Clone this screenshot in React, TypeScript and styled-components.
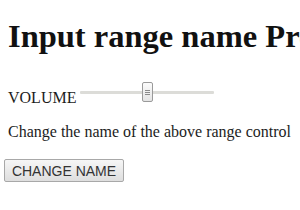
import React, { useState } from 'react';
import styled, { createGlobalStyle } from 'styled-components';

const GlobalStyle = createGlobalStyle`
    html, body {
        margin: 0;
        background: #ffffff;
        overflow: hidden;
    }
    body {
        padding: 8px;
        font-family: "Liberation Serif", "Times New Roman", serif;
        color: #1c1c1c;
        white-space: nowrap;
    }
`

const Title = styled.h1`
    font-size: 32.5px;
    font-weight: bold;
    margin: 10px 0 0 0;
    line-height: 37px;
    color: #111;
`

const VolumeRow = styled.div`
    display: flex;
    align-items: flex-start;
    margin-top: 27px;
    height: 24px;
    font-size: 16px;
`

const Label = styled.span`
    align-self: flex-end;
    line-height: 16px;
`

const Range = styled.input`
    -webkit-appearance: none;
    appearance: none;
    width: 134px;
    height: 20px;
    margin: 0 0 0 4px;
    background: transparent;

    &::-webkit-slider-runnable-track {
        height: 3px;
        background: #dcdcd8;
        border-radius: 1px;
    }

    &::-webkit-slider-thumb {
        -webkit-appearance: none;
        width: 11px;
        height: 20px;
        margin-top: -9px;
        border: 1px solid #9a9a9a;
        border-radius: 2px;
        background:
            linear-gradient(#8a8a8a, #8a8a8a) center 7px / 5px 1px no-repeat,
            linear-gradient(#8a8a8a, #8a8a8a) center 9px / 5px 1px no-repeat,
            linear-gradient(#8a8a8a, #8a8a8a) center 11px / 5px 1px no-repeat,
            linear-gradient(#fbfbfb, #e4e4e4);
        box-sizing: border-box;
    }
`

const Note = styled.p`
    font-size: 16px;
    margin: 16px 0 0 0;
    line-height: 20px;
`

const Button = styled.button`
    display: block;
    margin: 17px 0 0 -4px;
    width: 120px;
    height: 23px;
    padding: 0;
    font-family: "Liberation Sans", Arial, sans-serif;
    font-size: 14px;
    color: #333;
    border: 1px solid #a8a8a8;
    border-radius: 2px;
    background: linear-gradient(#f6f6f6, #dedede);
`

const App = () => {
    const [ volume, setVolume ] = useState(50);
    const [ name, setName ] = useState('volume');

    return (
        <>
            <GlobalStyle />
            <Title>Input range name Property</Title>
            <VolumeRow>
                <Label>VOLUME</Label>
                <Range
                    type="range"
                    name={name}
                    min={0}
                    max={100}
                    value={volume}
                    onChange={(e) => setVolume(Number(e.target.value))}
                />
            </VolumeRow>
            <Note>Change the name of the above range control</Note>
            <Button onClick={() => setName('newVolume')}>CHANGE NAME</Button>
        </>
    );
};

export default App;
